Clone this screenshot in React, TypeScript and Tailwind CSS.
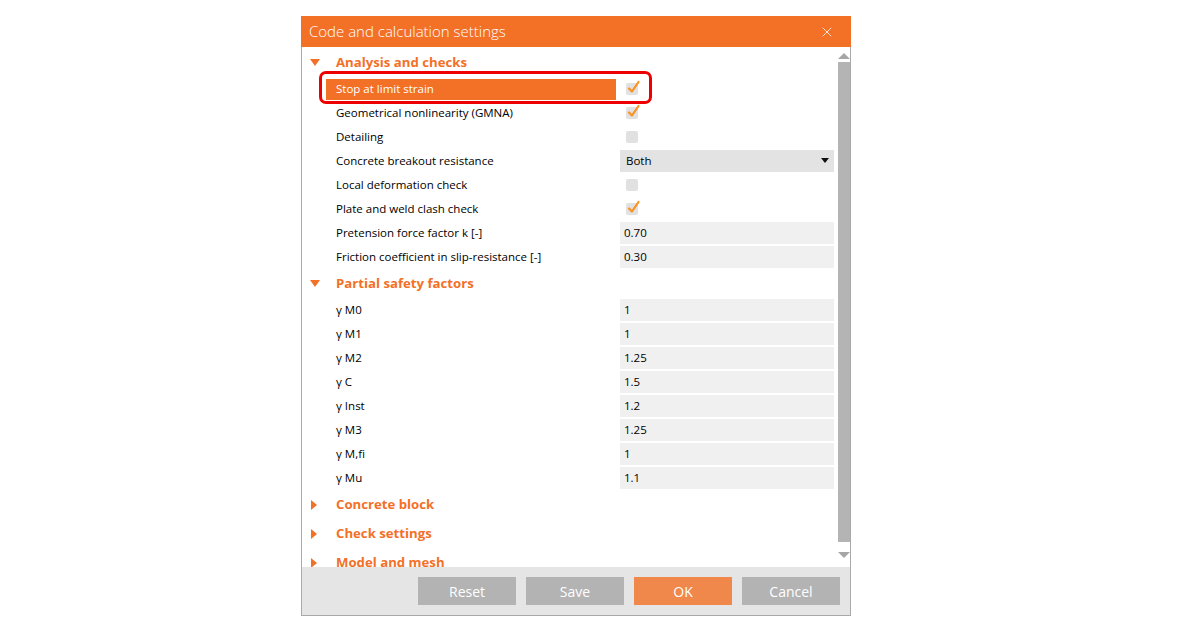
import { X } from 'lucide-react'

type Row =
  | { label: string; kind: 'check'; checked: boolean; selected?: boolean }
  | { label: string; kind: 'select'; value: string }
  | { label: string; kind: 'input'; value: string }

const ANALYSIS: Row[] = [
  { label: 'Stop at limit strain', kind: 'check', checked: true, selected: true },
  { label: 'Geometrical nonlinearity (GMNA)', kind: 'check', checked: true },
  { label: 'Detailing', kind: 'check', checked: false },
  { label: 'Concrete breakout resistance', kind: 'select', value: 'Both' },
  { label: 'Local deformation check', kind: 'check', checked: false },
  { label: 'Plate and weld clash check', kind: 'check', checked: true },
  { label: 'Pretension force factor k [-]', kind: 'input', value: '0.70' },
  { label: 'Friction coefficient in slip-resistance [-]', kind: 'input', value: '0.30' },
]

const SAFETY: Row[] = [
  { label: 'γ M0', kind: 'input', value: '1' },
  { label: 'γ M1', kind: 'input', value: '1' },
  { label: 'γ M2', kind: 'input', value: '1.25' },
  { label: 'γ C', kind: 'input', value: '1.5' },
  { label: 'γ Inst', kind: 'input', value: '1.2' },
  { label: 'γ M3', kind: 'input', value: '1.25' },
  { label: 'γ M,fi', kind: 'input', value: '1' },
  { label: 'γ Mu', kind: 'input', value: '1.1' },
]

function Checkbox({ checked }: { checked: boolean }) {
  return (
    <span className="relative block h-[12px] w-[12px] rounded-[2px] bg-[#e1e1e1]">
      {checked && (
        <svg className="absolute left-[1px] top-[-3px]" width="14" height="14" viewBox="0 0 14 14" aria-hidden="true">
          <path d="M2 8.5 L5 11.5 L11.5 2" fill="none" stroke="#f7931e" strokeWidth="2.2" strokeLinecap="round" strokeLinejoin="round" />
        </svg>
      )}
    </span>
  )
}

function Section({ title, open, rows }: { title: string; open: boolean; rows?: Row[] }) {
  return (
    <div>
      <div className="flex h-[29px] items-center">
        <span className="flex w-[34px] pl-[8px]">
          {open ? (
            <svg width="10" height="8" viewBox="0 0 10 8" aria-hidden="true">
              <path d="M0 0 H10 L5 7 Z" fill="#f37027" />
            </svg>
          ) : (
            <svg width="8" height="10" viewBox="0 0 8 10" aria-hidden="true">
              <path d="M1 0 V10 L7 5 Z" fill="#f37027" />
            </svg>
          )}
        </span>
        <span className="text-[13.2px] font-bold text-[#f37027]">{title}</span>
      </div>
      {open && rows?.map((r) => (
        <div key={r.label} className="flex h-[24px] items-center">
          <div className="w-[24px] shrink-0" />
          <div className={`flex h-[21px] w-[290px] shrink-0 items-center pl-[10px] ${'selected' in r && r.selected ? 'bg-[#f37027] text-white' : 'text-black'}`}>
            {r.label}
          </div>
          <div className="ml-[4px] flex h-[22px] w-[214px] items-center">
            {r.kind === 'check' && (
              <span className="pl-[6px]">
                <Checkbox checked={r.checked} />
              </span>
            )}
            {r.kind === 'select' && (
              <div className="flex h-full w-full items-center justify-between bg-[#e3e3e3] pl-[6px] pr-[5px]">
                <span>{r.value}</span>
                <svg width="8" height="6" viewBox="0 0 8 6" aria-hidden="true">
                  <path d="M0 0 H8 L4 5 Z" fill="#111" />
                </svg>
              </div>
            )}
            {r.kind === 'input' && (
              <div className="flex h-full w-full items-center bg-[#f0f0f0] pl-[4px]">{r.value}</div>
            )}
          </div>
        </div>
      ))}
    </div>
  )
}

export default function App() {
  return (
    <div className="h-[630px] w-[1200px] bg-white pl-[301px] pt-[16px]" style={{ fontFamily: '"Open Sans", "Noto Sans", sans-serif' }}>
      <div className="relative w-[550px] border border-t-0 border-[#a9a9a9]">
        <div className="-mx-px flex h-[31px] items-center justify-between bg-[#f37027] pl-[8px] pr-[16px]">
          <span className="text-[15px] font-light text-white">Code and calculation settings</span>
          <X size={16} strokeWidth={1.2} className="text-white" />
        </div>
        <div className="flex h-[520px] overflow-hidden bg-white pt-[1px] text-[11.5px]">
          <div className="w-[535px] shrink-0">
            <Section title="Analysis and checks" open rows={ANALYSIS} />
            <Section title="Partial safety factors" open rows={SAFETY} />
            <Section title="Concrete block" open={false} />
            <Section title="Check settings" open={false} />
            <Section title="Model and mesh" open={false} />
          </div>
          <div className="flex w-[13px] flex-col items-center">
            <svg className="mt-[4px]" width="12" height="7" viewBox="0 0 12 7" aria-hidden="true">
              <path d="M0 7 H12 L6 1 Z" fill="#a6a6a6" />
            </svg>
            <div className="mt-[3px] h-[480px] w-[12px] bg-[#b4b4b4]" />
            <svg className="mt-[10px]" width="12" height="7" viewBox="0 0 12 7" aria-hidden="true">
              <path d="M0 0 H12 L6 6 Z" fill="#a6a6a6" />
            </svg>
          </div>
        </div>
        <div className="flex h-[48px] items-center justify-end gap-[10px] bg-[#e5e5e5] pr-[10px]">
          {['Reset', 'Save', 'OK', 'Cancel'].map((b) => (
            <button
              key={b}
              className={`h-[28px] w-[98px] text-[14px] text-white ${b === 'OK' ? 'bg-[#f0884c]' : 'bg-[#b3b3b3]'}`}
            >
              {b}
            </button>
          ))}
        </div>
        <div className="pointer-events-none absolute left-[17px] top-[55px] h-[33px] w-[333px] rounded-[7px] border-[3px] border-[#ee0000]" />
      </div>
    </div>
  )
}
